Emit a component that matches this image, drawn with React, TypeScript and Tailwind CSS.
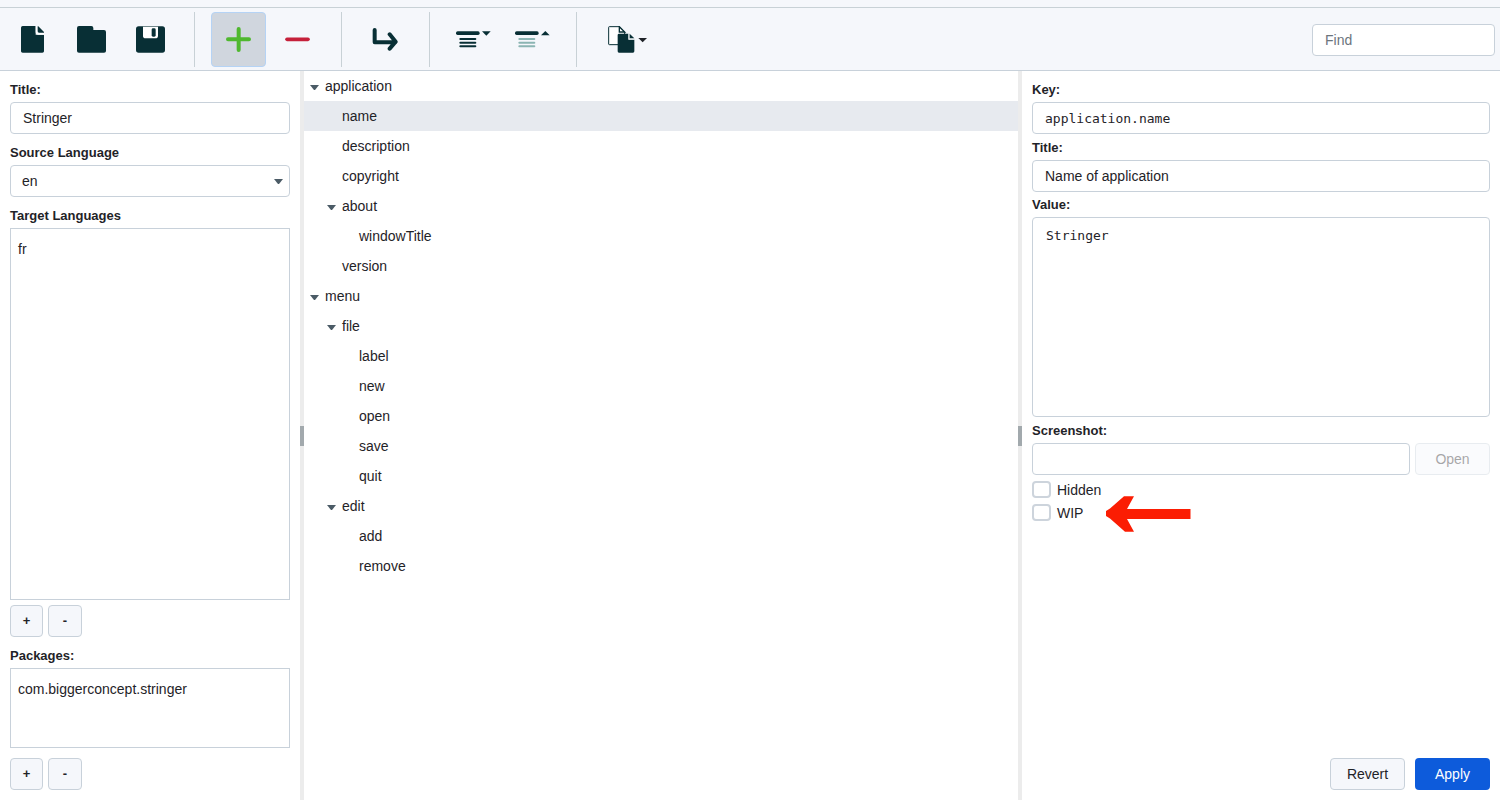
import { useState } from 'react';
import type { ReactNode } from 'react';

const NewIcon = () => (
  <svg width="23" height="27" viewBox="0 0 69 81" fill="#082f35">
    <path d="M5 0H44V26H69V76Q69 80 64 80H5Q0 80 0 76V5Q0 0 5 0Z" />
    <path d="M52 1L69 18V20H54Q50 20 50 16V1Z" />
    <path d="M46 0V19Q46 24 51 24H69" fill="none" stroke="#ffffff" strokeWidth="4" />
  </svg>
);

const OpenIcon = () => (
  <svg width="29" height="27" viewBox="0 0 87 81" fill="#082f35">
    <path d="M6 0H43Q49 0 49 6V12H81Q87 12 87 18V75Q87 80 81 80H6Q0 80 0 75V6Q0 0 6 0Z" />
  </svg>
);

const SaveIcon = () => (
  <svg width="29" height="27" viewBox="0 0 87 81">
    <rect y="1" width="87" height="79" rx="8" fill="#082f35" />
    <path d="M21 2H66V29Q66 37 58 37H29Q21 37 21 29Z" fill="#ffffff" />
    <rect x="47" y="7" width="12" height="25" rx="4" fill="#082f35" />
  </svg>
);

const PlusIcon = () => (
  <svg width="25" height="25" viewBox="0 0 75 75" fill="none" stroke="#4fb82f" strokeWidth="12" strokeLinecap="round">
    <path d="M38 6V69M6 37H69" />
  </svg>
);

const MinusIcon = () => (
  <svg width="25" height="25" viewBox="0 0 75 75" fill="none" stroke="#c5203a" strokeWidth="11" strokeLinecap="round">
    <path d="M6 37H69" />
  </svg>
);

const ArrowIcon = () => (
  <svg width="27" height="23" viewBox="0 0 81 69" fill="none" stroke="#082f35" strokeWidth="12" strokeLinecap="round" strokeLinejoin="round">
    <path d="M8 6V43H70M53 19L71 41L53 62" />
  </svg>
);

const LinesIcon = ({ up }: { up?: boolean }) => (
  <svg width="35" height="17" viewBox="0 0 105 51">
    <rect y="1" width="71" height="11" rx="5" fill="#082f35" />
    <g fill={up ? '#8bb5b3' : '#082f35'}>
      <rect x="10" y="21" width="51" height="6" rx="3" />
      <rect x="10" y="32" width="51" height="6" rx="3" />
      <rect x="10" y="43" width="51" height="6" rx="3" />
    </g>
    <path d={up ? 'M78 13L91 0L104 13Z' : 'M78 1H104L91 14Z'} fill="#082f35" />
  </svg>
);

const CopyIcon = () => (
  <svg width="39" height="27" viewBox="0 0 117 81">
    <path d="M4 2H34L50 18V56H4Q2 56 2 54V4Q2 2 4 2Z" fill="#ffffff" stroke="#082f35" strokeWidth="3" />
    <path d="M34 2V18H50Z" fill="#ffffff" stroke="#082f35" strokeWidth="4" />
    <path d="M33 23H61V41H79V76Q79 80 75 80H33Q29 80 29 76V27Q29 23 33 23Z" fill="#082f35" />
    <path d="M63 23V40H79" fill="none" stroke="#d5e0e2" strokeWidth="3" />
    <path d="M65 23L79 37H65Z" fill="#082f35" />
    <path d="M91 36H117L104 49Z" fill="#1f2328" />
  </svg>
);

const Caret = () => (
  <svg width="9" height="5" viewBox="0 0 9 5" fill="#4b5b66">
    <path d="M0 0H9L5 5H4Z" />
  </svg>
);

const input = 'h-8 w-full min-w-0 rounded border border-[#c8d1da] bg-white px-3 outline-none placeholder:text-[#6c757d]';
const label = 'block h-5 mb-[2px] text-[13px] leading-5 font-bold';
const button = 'h-8 rounded border border-[#c8d1da] bg-[#f5f7fb]';

const Tool = ({ name, active, wide, children }: { name: string; active?: boolean; wide?: boolean; children: ReactNode }) => (
  <button
    aria-label={name}
    className={`flex h-[55px] items-center justify-center rounded border ${wide ? 'w-[68px]' : 'w-[55px]'} ${
      active ? 'border-[#b5d3f5] bg-[#d0d6de]' : 'border-transparent'
    }`}
  >
    {children}
  </button>
);

const Separator = () => <div className="mx-3 h-[55px] w-px bg-[#c8d1d6]" />;

const Splitter = () => (
  <div className="flex w-1 shrink-0 items-center bg-[#ececec]">
    <div className="h-5 w-full bg-[#a2a9ad]"></div>
  </div>
);

const AddRemove = ({ what }: { what: string }) => (
  <div className="flex gap-[5px]">
    <button aria-label={`Add ${what}`} className={`${button} w-[33px] text-[13px] font-bold`}>+</button>
    <button aria-label={`Remove ${what}`} className={`${button} w-[34px] text-[13px] font-bold`}>-</button>
  </div>
);

const rows = [
  { id: 'application', text: 'application', level: 0, open: true },
  { id: 'application.name', text: 'name', level: 1 },
  { id: 'application.description', text: 'description', level: 1 },
  { id: 'application.copyright', text: 'copyright', level: 1 },
  { id: 'application.about', text: 'about', level: 1, open: true },
  { id: 'application.about.windowTitle', text: 'windowTitle', level: 2 },
  { id: 'application.version', text: 'version', level: 1 },
  { id: 'menu', text: 'menu', level: 0, open: true },
  { id: 'menu.file', text: 'file', level: 1, open: true },
  { id: 'menu.file.label', text: 'label', level: 2 },
  { id: 'menu.file.new', text: 'new', level: 2 },
  { id: 'menu.file.open', text: 'open', level: 2 },
  { id: 'menu.file.save', text: 'save', level: 2 },
  { id: 'menu.file.quit', text: 'quit', level: 2 },
  { id: 'menu.edit', text: 'edit', level: 1, open: true },
  { id: 'menu.edit.add', text: 'add', level: 2 },
  { id: 'menu.edit.remove', text: 'remove', level: 2 }
];

const indents = ['pl-[6px]', 'pl-[23px]', 'pl-[40px]'];

const Toolbar = () => (
  <header className="border-b border-[#c8d1da] bg-[#f5f7fb]">
    <div className="h-2 border-b border-[#c8d1d6]"></div>
    <div className="flex items-center gap-1 px-[5px] pt-1 pb-[3px]">
      <Tool name="New"><NewIcon /></Tool>
      <Tool name="Open file"><OpenIcon /></Tool>
      <Tool name="Save"><SaveIcon /></Tool>
      <Separator />
      <Tool name="Add" active><PlusIcon /></Tool>
      <Tool name="Remove"><MinusIcon /></Tool>
      <Separator />
      <Tool name="Move"><ArrowIcon /></Tool>
      <Separator />
      <Tool name="Expand all"><LinesIcon /></Tool>
      <Tool name="Collapse all"><LinesIcon up /></Tool>
      <Separator />
      <Tool name="Copy" wide><CopyIcon /></Tool>
      <div className="ml-auto w-[183px]">
        <input type="text" aria-label="Find" placeholder="Find" className={input} />
      </div>
    </div>
  </header>
);

const Project = () => (
  <aside className="flex w-1/5 shrink-0 flex-col px-[10px] pt-[9px] pb-[10px]">
    <label htmlFor="project-title" className={label}>Title:</label>
    <input id="project-title" type="text" defaultValue="Stringer" className={input} />
    <label htmlFor="source" className={`${label} mt-[9px]`}>Source Language</label>
    <div className="relative">
      <select id="source" className="h-8 w-full appearance-none rounded border border-[#c8d1da] bg-white px-[11px] outline-none">
        <option>en</option>
      </select>
      <div className="pointer-events-none absolute inset-y-0 right-[7px] flex items-center">
        <Caret />
      </div>
    </div>
    <h2 className={`${label} mt-[9px]`}>Target Languages</h2>
    <ul className="min-h-0 flex-1 border border-[#c8d1da] px-[7px] py-[5px] leading-[30px]">
      <li>fr</li>
    </ul>
    <div className="mt-[5px]">
      <AddRemove what="language" />
    </div>
    <h2 className={`${label} mt-[9px]`}>Packages:</h2>
    <ul className="h-20 border border-[#c8d1da] px-[7px] py-[5px] leading-[30px]">
      <li>com.biggerconcept.stringer</li>
    </ul>
    <div className="mt-[10px]">
      <AddRemove what="package" />
    </div>
  </aside>
);

const Tree = () => {
  const [selected, setSelected] = useState('application.name');

  return (
    <main className="min-w-0 flex-1 overflow-auto">
      {rows.map((row) => (
        <button
          key={row.id}
          onClick={() => setSelected(row.id)}
          className={`flex h-[30px] w-full items-center gap-[6px] text-left ${indents[row.level]} ${
            row.id === selected ? 'bg-[#e7eaef]' : ''
          }`}
        >
          {row.level > 0 || row.open ? <span className="w-[9px] pt-[3px]">{row.open && <Caret />}</span> : null}
          <span>{row.text}</span>
        </button>
      ))}
    </main>
  );
};

const Check = ({ text }: { text: string }) => (
  <label className="flex h-[23px] items-center gap-[6px]">
    <input type="checkbox" className="h-[17px] w-[19px] appearance-none rounded border-2 border-[#cdd4dc] bg-white checked:bg-[#0d5bdb]" />
    <span className="pt-px">{text}</span>
  </label>
);

const Details = () => (
  <aside className="flex w-[478px] shrink-0 flex-col px-[10px] pt-[9px] pb-[10px]">
    <label htmlFor="key" className={label}>Key:</label>
    <input id="key" type="text" defaultValue="application.name" className={`${input} font-['DejaVu_Sans_Mono',monospace] text-[13px]`} />
    <label htmlFor="title" className={`${label} mt-1`}>Title:</label>
    <input id="title" type="text" defaultValue="Name of application" className={input} />
    <label htmlFor="value" className={`${label} mt-[3px]`}>Value:</label>
    <textarea
      id="value"
      defaultValue="Stringer"
      className="h-[200px] w-full resize-none rounded border border-[#c8d1da] px-[13px] py-2 font-['DejaVu_Sans_Mono',monospace] text-[13px] leading-5 outline-none"
    />
    <label htmlFor="screenshot" className={`${label} mt-1`}>Screenshot:</label>
    <div className="mb-[3px] flex gap-[5px]">
      <input id="screenshot" type="text" className={input} />
      <button disabled className={`${button} w-[75px] shrink-0 opacity-40`}>Open</button>
    </div>
    <Check text="Hidden" />
    <div className="relative">
      <Check text="WIP" />
      <svg className="absolute top-[-5px] left-[73px]" width="86" height="37" viewBox="0 0 86 37" fill="#fb1d03">
        <path d="M1 15L5 12.500L19 0.300H29L22 13H85.500V23H22L29 35.800H20L5 22.500L1 20Z" />
      </svg>
    </div>
    <div className="mt-auto flex justify-end gap-[10px]">
      <button className={`${button} w-[75px]`}>Revert</button>
      <button className="h-8 w-[75px] rounded bg-[#0d5bdb] text-white">Apply</button>
    </div>
  </aside>
);

const App = () => (
  <div className="flex h-screen flex-col bg-white font-['Liberation_Sans',Arial,sans-serif] text-[14px] text-[#1f2328]">
    <Toolbar />
    <div className="flex min-h-0 flex-1">
      <Project />
      <Splitter />
      <Tree />
      <Splitter />
      <Details />
    </div>
  </div>
);

export default App;
